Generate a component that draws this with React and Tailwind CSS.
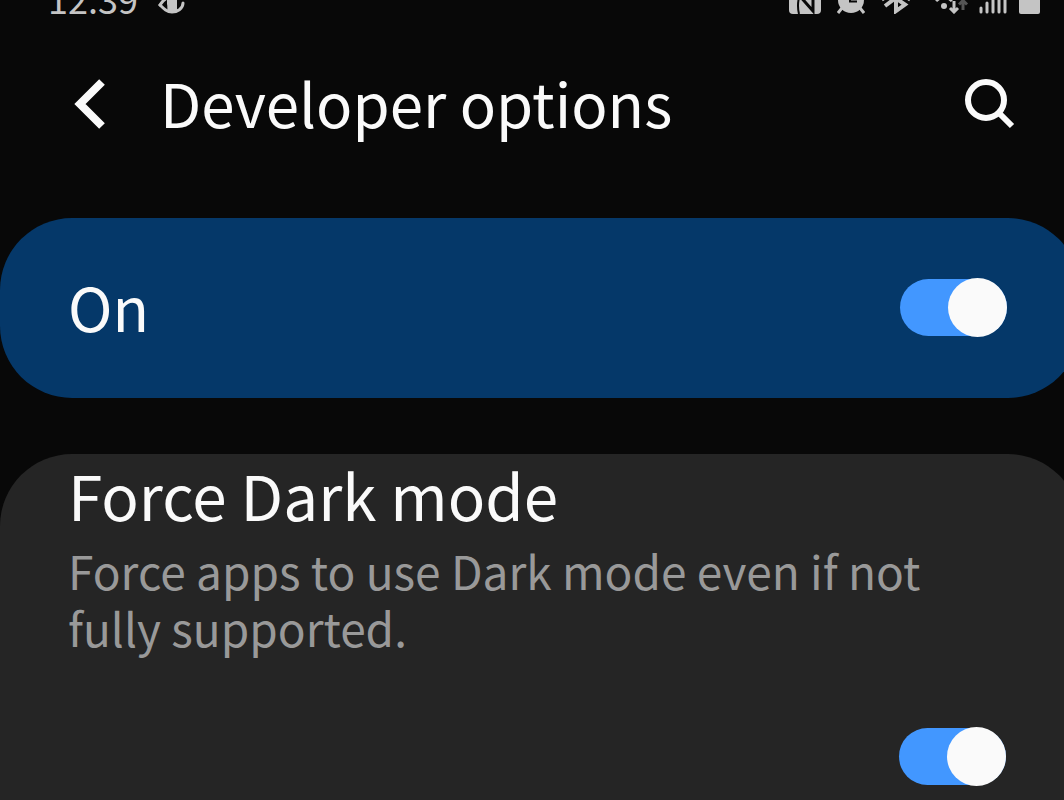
import { useState } from "react";

function EyeIcon() {
  return (
    <svg width="28" height="26" viewBox="0 0 28 26" fill="none" stroke="#c4c4c4" strokeWidth="3" strokeLinecap="round">
      <path d="M2 17C6 21 9 24 14 24S25 21 25 15" />
      <path d="M2 17C5 12 8 9 14 9" />
      <path d="M9 10H19V22L16 25H12C8 22 10 19 9 16Z" fill="#c4c4c4" stroke="none" />
    </svg>
  );
}

function NfcIcon() {
  return (
    <svg width="32" height="32" viewBox="0 0 32 32" fill="#c4c4c4">
      <rect width="32" height="32" rx="4" />
      <path d="M11 12C9 18 8 24 10 32" fill="none" stroke="#080808" strokeWidth="2" />
      <path d="M9 12L24 29V10" fill="none" stroke="#080808" strokeWidth="3" />
    </svg>
  );
}

function AlarmIcon() {
  return (
    <svg width="28" height="30" viewBox="0 0 28 30" fill="#c4c4c4">
      <circle cx="14" cy="16" r="13" />
      <path d="M5 24L1 29M23 24L27 29M2 7L7 2M26 7L21 2" stroke="#c4c4c4" strokeWidth="3" />
      <path d="M13 8V17.500H20" fill="none" stroke="#080808" strokeWidth="2" />
    </svg>
  );
}

function BluetoothIcon() {
  return (
    <svg width="30" height="32" viewBox="0 0 30 32" fill="none" stroke="#c4c4c4" strokeWidth="4">
      <path d="M4 9L24 22.500L15 29V3L24 9L4 24" />
      <path d="M4 16L1 18M26 16L29 18" strokeWidth="3" />
    </svg>
  );
}

function WifiIcon() {
  return (
    <svg width="34" height="30" viewBox="0 0 34 30" fill="none" stroke="#c4c4c4" strokeWidth="3">
      <path d="M1 17C6 12 12 12 17 17" />
      <circle cx="9" cy="22" r="3" fill="#c4c4c4" stroke="none" />
      <path d="M19 17V28M15 24L19 28L23 24" />
      <path d="M28 26V17M24 20.500L28 16.500L32 20.500" stroke="#555555" />
    </svg>
  );
}

function SignalIcon() {
  return (
    <svg width="28" height="30" viewBox="0 0 28 30" stroke="#c4c4c4" strokeWidth="3" strokeLinecap="round">
      <path d="M2 24V28M8 19V28M14 14V28M20 8V28M26 2V28" />
    </svg>
  );
}

function BackIcon() {
  return (
    <svg width="32" height="50" viewBox="0 0 32 50" fill="none" stroke="#fafafa" strokeWidth="8">
      <path d="M28 3L6 25L28 47" />
    </svg>
  );
}

function SearchIcon() {
  return (
    <svg width="52" height="52" viewBox="0 0 52 52" fill="none" stroke="#fafafa" strokeWidth="6">
      <circle cx="22" cy="22" r="18" />
      <path d="M34 34L48 48" />
    </svg>
  );
}

function Switch({ id, checked, onChange }) {
  return (
    <input
      id={id}
      type="checkbox"
      role="switch"
      checked={checked}
      onChange={(e) => onChange(e.target.checked)}
      className="flex h-[57px] w-[107px] shrink-0 cursor-pointer appearance-none items-center rounded-full bg-gray-600 before:size-[59px] before:shrink-0 before:rounded-full before:bg-[#fafafa] before:content-[''] checked:justify-end checked:bg-[#4297ff]"
    />
  );
}

function App() {
  const [enabled, setEnabled] = useState(true);
  const [forceDark, setForceDark] = useState(true);

  return (
    <div className="flex min-h-screen flex-col overflow-x-hidden bg-[#080808] font-['Noto_Sans_CJK_KR','Noto_Sans',sans-serif] text-[#fafafa]">
      {/* Status bar */}
      <div className="flex h-4 items-end justify-between overflow-hidden pr-6 pb-0.5 pl-12 text-[#c4c4c4]">
        <div className="flex items-end gap-5">
          <span className="text-[36px] leading-[32px]">12:39</span>
          <EyeIcon />
        </div>
        <div className="flex items-end">
          <div className="flex items-end gap-4">
            <NfcIcon />
            <AlarmIcon />
            <BluetoothIcon />
          </div>
          <div className="ml-6 flex items-end gap-2.5">
            <WifiIcon />
            <SignalIcon />
          </div>
          <span className="ml-3 h-8 w-[21px] rounded-[2px] bg-[#c4c4c4]" />
        </div>
      </div>

      {/* Header */}
      <header className="flex h-[176px] items-center pr-12 pl-[74px]">
        <button aria-label="Back" className="cursor-pointer">
          <BackIcon />
        </button>
        <h1 className="ml-[50px] flex-1 pb-1 pl-1 text-[60px] leading-[80px]">
          Developer options
        </h1>
        <button aria-label="Search" className="cursor-pointer">
          <SearchIcon />
        </button>
      </header>

      {/* The panels run past the right edge of the screen */}
      <main className="-mr-4 mt-[26px] flex flex-1 flex-col gap-14">
        <section className="flex h-[180px] items-center justify-between rounded-[72px] bg-[#053869] pr-[73px] pb-0.5 pl-[68px]">
          <label htmlFor="developer-options" className="pb-0.5 text-[60px] leading-[80px]">
            On
          </label>
          <Switch id="developer-options" checked={enabled} onChange={setEnabled} />
        </section>

        <section className="flex flex-1 flex-col rounded-t-[72px] bg-[#252525] pr-[74px] pb-3 pl-[68px]">
          <label htmlFor="force-dark" className="text-[62px] leading-[80px]">
            Force Dark mode
          </label>
          <p className="max-w-[880px] pt-2 text-[46px] leading-[57px] text-[#999999]">
            Force apps to use Dark mode even if not fully supported.
          </p>
          <div className="mt-[72px] flex justify-end">
            <Switch id="force-dark" checked={forceDark} onChange={setForceDark} />
          </div>
        </section>
      </main>
    </div>
  );
}

export default App;
